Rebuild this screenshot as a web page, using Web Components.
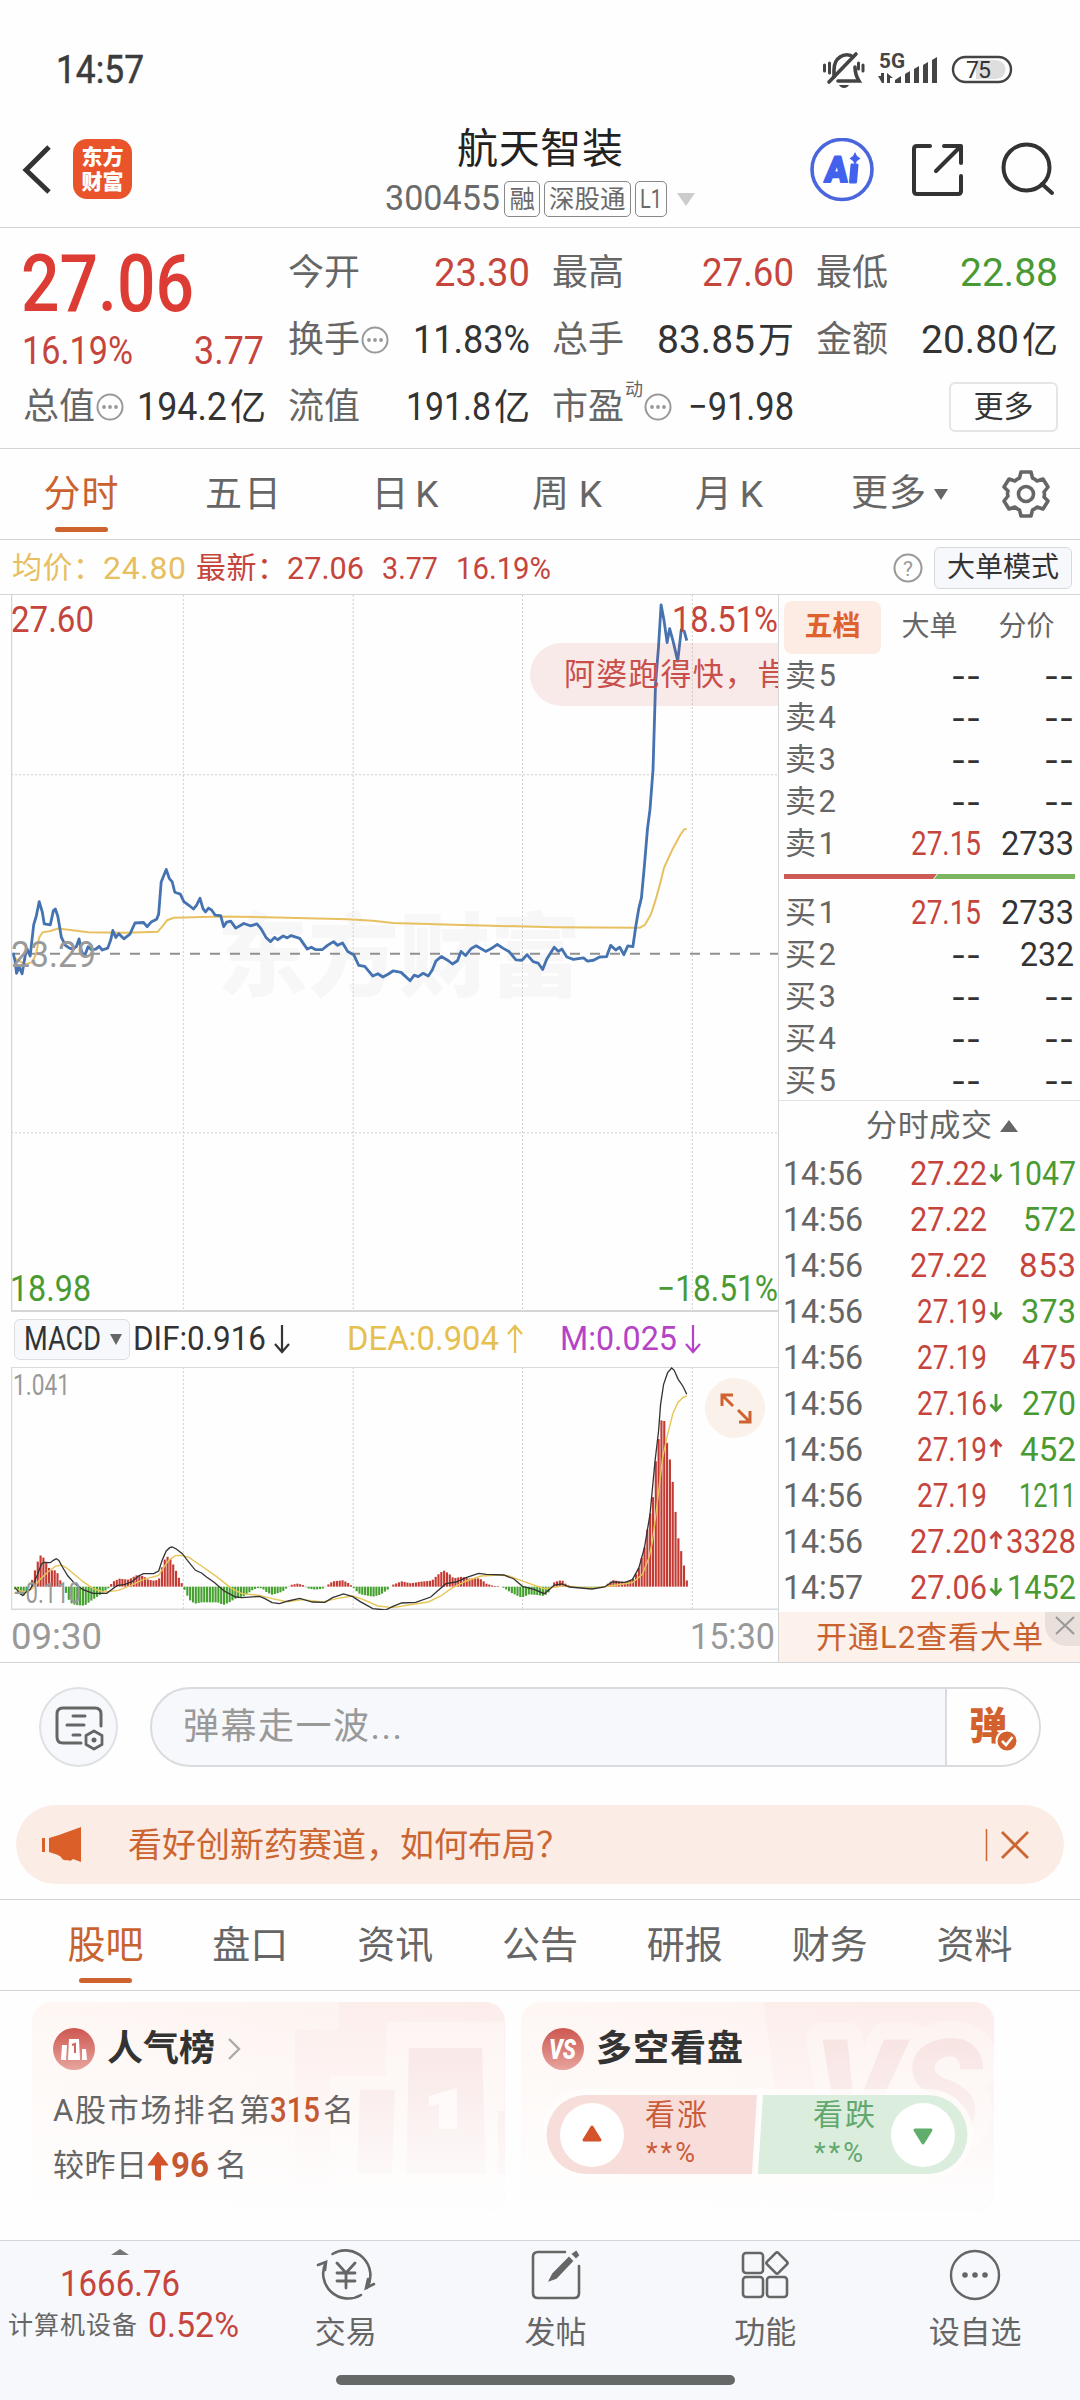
<!DOCTYPE html>
<html lang="zh-CN">
<head>
<meta charset="utf-8">
<title>航天智装 300455</title>
<style>
    body {
        margin: 0;
        width: 1080px;
        height: 2400px;
        overflow: hidden;
        background: #fefefe;
        font-family: Roboto, "Noto Sans CJK SC", sans-serif;
        color: #666;
        --red: #c5453d;
        --green: #4a9a33;
        --orange: #c9622f;
        --line: #d4d5d6;
        --soft: #f7f8fb;
    }
</style>
</head>
<body>
<status-bar></status-bar>
<app-header></app-header>
<quote-panel></quote-panel>
<period-tabs></period-tabs>
<chart-info></chart-info>
<chart-area></chart-area>
<danmu-bar></danmu-bar>
<promo-banner>看好创新药赛道，如何布局？</promo-banner>
<section-tabs></section-tabs>
<card-row></card-row>
<bottom-nav></bottom-nav>

<script>
class BaseElement extends HTMLElement {
    constructor() {
        super();
        this.myRoot = this.attachShadow({ mode: "open" });
        this.myRoot.innerHTML = this.Render();
    }
}

// single line of text fitted to a given width: narrowed if too long, spread if too short
class FitText extends HTMLElement {
    constructor() {
        super();
        this.myRoot = this.attachShadow({ mode: "open" });
        this.myRoot.innerHTML = `
            <style>
            :host { display: inline-block; white-space: nowrap; flex: none; text-align: left; }
            span { display: inline-block; transform-origin: 0 50%; }
            </style>
            <span><slot></slot></span>
        `
    }

    connectedCallback() {
        const span = this.myRoot.querySelector("span");
        const count = this.textContent.length;
        const width = Number(this.getAttribute("w"));
        const natural = span.getBoundingClientRect().width;
        if (!natural || !width || count < 2) return;
        if (natural > width) {
            this.style.width = width + "px";
            span.style.transform = `scaleX(${width / natural})`;
            return;
        }
        const space = (width - natural) / (count - 1);
        span.style.letterSpacing = space + "px";
        span.style.marginRight = -space + "px";
    }
}

class StatusBar extends BaseElement {
    Render() {
        return `
            <style>
            :host { display: flex; height: 112px; padding: 28px 54px 0 56px; box-sizing: border-box; align-items: flex-start; color: #3c3c3c; }
            .time { font-size: 38px; line-height: 85px; flex: 1; -webkit-text-stroke: .5px #3c3c3c; }
            svg { display: block; margin-top: 19px; }
            </style>
            <div class="time"><fit-text w="88">14:57</fit-text></div>
            <svg width="206" height="46" viewBox="820 48 206 46">
                <g fill="none" stroke="#444" stroke-width="3.6" stroke-linecap="round">
                    <path d="M834 78v-7c0-7 3-11 6-13 4-3 10-3 13 0M838 82h19M855 68c0 6 1 9 4 14h-5"/>
                    <path d="M829 83 856 55"/>
                    <path d="M824.500 66v6M829.500 64v10M863 66v6M858.500 64v6" stroke-width="3"/>
                </g>
                <path d="M839 86h10c-2 4-8 4-10 0z" fill="#444"/>
                <text x="879" y="68.500" font-size="20" font-weight="700" fill="#444" textLength="26" lengthAdjust="spacingAndGlyphs" font-family="Roboto">5G</text>
                <path d="M878 77h3v-3h3v10h-2zM887 74l6 5h-3v5h-3z" fill="#444"/>
                <g fill="#444">
                    <path d="M895 81l6-4v7h-6zM905 75l5-3v12h-5zM914 70l5-3v17h-5zM923 66l5-3v21h-5zM932 61l5-3v26h-5z"/>
                </g>
                <rect x="953" y="58" width="58" height="25" rx="12.500" fill="#fff" stroke="#444" stroke-width="2.400"/>
                <path d="M976 61h20a9.500 9.500 0 0 1 0 19h-20z" fill="#dedede"/>
                <text x="966" y="78.500" font-size="23" fill="#333" textLength="25" font-family="Roboto">75</text>
            </svg>
        `
    }
}

class AppHeader extends BaseElement {
    Render() {
        return `
            <style>
            :host { display: flex; height: 116px; box-sizing: border-box; border-bottom: 1px solid var(--line); position: relative; }
            .left { width: 132px; display: flex; padding: 27px 0 0 22px; align-items: flex-start; box-sizing: border-box; }
            .logo {
                width: 59px; height: 60px; border-radius: 14px; background: #e9542a; color: #fff; margin-left: 21px; box-sizing: border-box;
                font: 900 21px/25px "Noto Sans CJK SC", sans-serif; text-align: center; padding-top: 4px;
            }
            .mid { flex: 1; text-align: center; padding-left: 138px; }
            h1 { margin: 9px 0 0; font: 400 41px/56px Roboto, "Noto Sans CJK SC", sans-serif; color: #222; }
            .code { display: flex; justify-content: center; align-items: center; gap: 4px; font-size: 35px; line-height: 38px; color: #6a6a6a; margin-top: 3px; }
            .tag { border: 1px solid #888; border-radius: 5px; font-size: 25.500px; line-height: 34px; padding: 0 4px; height: 34px; }
            .down { border: 9px solid transparent; border-top: 13px solid #ccc; border-bottom: 0; margin-left: 6px; }
            </style>
            <div class="left">
                <svg width="30" height="60" viewBox="0 0 30 60"><path d="M27 8 4 31 27 53" fill="none" stroke="#333" stroke-width="5"/></svg>
                <div class="logo">东方<br>财富</div>
            </div>
            <div class="mid">
                <h1><fit-text w="166">航天智装</fit-text></h1>
                <div class="code"><fit-text w="115">300455</fit-text><span class="tag">融</span><span class="tag">深股通</span><span class="tag"><fit-text w="22">L1</fit-text></span><span class="down"></span></div>
            </div>
            <svg width="270" height="66" viewBox="810 138 270 66" style="margin-top:26px">
                <circle cx="842" cy="169.500" r="30" fill="#fff" stroke="#4a66dd" stroke-width="3.600"/>
                <g fill="#4262ee" stroke="#4262ee" stroke-linejoin="round" font-family="Roboto">
                    <text transform="translate(824 182) skewX(-5)" font-size="36" font-weight="900" textLength="23" lengthAdjust="spacingAndGlyphs" stroke-width="2">A</text>
                    <path d="M852 165h5l-1.500 17h-5z" stroke-width="3"/>
                </g>
                <path d="M855 152l2 4 3.500 2.500-3.500 2.500-2 4-2-4-3.500-2.500 3.500-2.500z" fill="#4262ee"/>
                <g fill="none" stroke="#333" stroke-width="4" stroke-linecap="round" stroke-linejoin="round">
                    <path d="M930 146h-13q-3 0-3 3v42q0 3 3 3h41q3 0 3-3v-15M944 146h17v17M960 147l-24 24"/>
                    <circle cx="1026.500" cy="167.500" r="23"/>
                    <path d="M1042 184l10 9"/>
                </g>
            </svg>
        `
    }
}

class QuoteCell extends HTMLElement {
    constructor() {
        super();
        this.myRoot = this.attachShadow({ mode: "open" });
        const dots = this.hasAttribute("dots") ? `<svg width="28" height="28" viewBox="0 0 28 28"><circle cx="14" cy="14" r="12.500" fill="none" stroke="#999" stroke-width="2"/><g fill="#999"><circle cx="8" cy="14" r="1.900"/><circle cx="14" cy="14" r="1.900"/><circle cx="20" cy="14" r="1.900"/></g></svg>` : "";
        const sup = this.getAttribute("sup");
        this.myRoot.innerHTML = `
            <style>
            :host { display: flex; height: 66px; align-items: center; justify-content: space-between; color: #333; font-size: 39px; line-height: 66px; margin-right: -2px; }
            .label { display: flex; align-items: center; color: #666; font-size: 36px; }
            sup { font-size: 18px; line-height: 20px; align-self: flex-start; margin: 6px 0 0 1px; }
            svg { display: block; margin-left: 1px; }
            </style>
            <span class="label"><fit-text w="72">${this.getAttribute("label")}</fit-text>${sup ? `<sup>${sup}</sup>` : ""}${dots}</span>
            <span class="value"><slot></slot></span>
        `
    }
}

class QuotePanel extends BaseElement {
    Render() {
        return `
            <style>
            :host { display: grid; grid-template-columns: 241px repeat(3, 240px); gap: 0 24px; height: 221px; box-sizing: border-box; padding: 12px 24px 0 23px; border-bottom: 1px solid var(--line); align-content: start; }
            .last { grid-row: span 2; color: var(--red); }
            .price { font-size: 79px; line-height: 88px; color: #dc3c33; font-weight: 500; margin-left: -2px; }
            .change { display: flex; justify-content: space-between; font-size: 38px; line-height: 46px; margin-left: -1px; }
            .red { color: var(--red); }
            .green { color: var(--green); }
            .cn { font-size: 36px; margin-left: 3px; }
            .more { align-self: center; justify-self: end; width: 109px; height: 50px; box-sizing: border-box; border: 2px solid #e4e5e6; border-radius: 6px; font-size: 30px; line-height: 45px; color: #333; text-align: center; margin-right: -2px; }
            </style>
            <div class="last">
                <div class="price"><fit-text w="173">27.06</fit-text></div>
                <div class="change"><fit-text w="111">16.19%</fit-text><fit-text w="70">3.77</fit-text></div>
            </div>
            <quote-cell label="今开"><fit-text w="96" class="red">23.30</fit-text></quote-cell>
            <quote-cell label="最高"><fit-text w="92" class="red">27.60</fit-text></quote-cell>
            <quote-cell label="最低"><fit-text w="98" class="green">22.88</fit-text></quote-cell>
            <quote-cell label="换手" dots><fit-text w="117">11.83%</fit-text></quote-cell>
            <quote-cell label="总手"><fit-text w="98">83.85</fit-text><span class="cn">万</span></quote-cell>
            <quote-cell label="金额"><fit-text w="98">20.80</fit-text><span class="cn">亿</span></quote-cell>
            <quote-cell label="总值" dots><fit-text w="90">194.2</fit-text><span class="cn">亿</span></quote-cell>
            <quote-cell label="流值"><fit-text w="85">191.8</fit-text><span class="cn">亿</span></quote-cell>
            <quote-cell label="市盈" sup="动" dots><fit-text w="106">−91.98</fit-text></quote-cell>
            <div class="more">更多</div>
        `
    }
}

class PeriodTabs extends BaseElement {
    Render() {
        return `
            <style>
            :host { display: flex; height: 91px; box-sizing: border-box; border-bottom: 1px solid var(--line); font-size: 37px; line-height: 92px; }
            div { width: 162px; text-align: center; }
            .on { color: var(--orange); display: flex; flex-direction: column; align-items: center; }
            .on fit-text { height: 78px; }
            .on::after { content: ""; width: 53px; height: 5px; border-radius: 3px; background: #cf632f; }
            .more { display: flex; align-items: center; justify-content: center; gap: 8px; padding-left: 17px; width: 145px; }
            .more i { border: 7px solid transparent; border-top: 11px solid #666; border-bottom: 0; }
            .gear { width: 108px; display: flex; align-items: center; justify-content: center; }
            </style>
            <div class="on"><fit-text w="75">分时</fit-text></div>
            <div><fit-text w="76">五日</fit-text></div>
            <div><fit-text w="67">日K</fit-text></div>
            <div><fit-text w="70">周K</fit-text></div>
            <div><fit-text w="68">月K</fit-text></div>
            <div class="more"><fit-text w="75">更多</fit-text><i></i></div>
            <div class="gear">
                <svg width="48" height="50" viewBox="-24 -25 48 50" fill="none" stroke="#666" stroke-width="3.600" stroke-linejoin="round">
                    <path d="M-5-22H5L6.500-16Q9-15 11-13L17-15 22-7 18-2Q19 0 18 3L22 7 17 15 11 13Q9 15 6.500 16L5 22H-5L-6.500 16Q-9 15-11 13L-17 15-22 7-18 2Q-19 0-18-3L-22-7-17-15-11-13Q-9-15-6.500-16Z"/>
                    <circle r="7.500"/>
                </svg>
            </div>
        `
    }
}

class ChartInfo extends BaseElement {
    Render() {
        return `
            <style>
            :host { display: flex; height: 55px; box-sizing: border-box; border-bottom: 1px solid var(--line); padding: 2px 8px 0 12px; align-items: center; font-size: 32px; line-height: 50px; color: var(--red); }
            .cn { font-size: 30px; }
            .avg { color: #e7bf60; display: flex; width: 184px; }
            .new { display: flex; flex: 1; }
            .btn { box-sizing: border-box; width: 138px; height: 42px; border: 1px solid #d6d8dc; border-radius: 6px; background: var(--soft); color: #333; font-size: 28px; line-height: 39px; text-align: center; margin-left: 11px; }
            </style>
            <div class="avg"><fit-text class="cn" w="91">均价：</fit-text><fit-text w="83">24.80</fit-text></div>
            <div class="new"><fit-text class="cn" w="91">最新：</fit-text><fit-text w="77">27.06</fit-text><fit-text w="56" style="margin-left:18px">3.77</fit-text><fit-text w="95" style="margin-left:18px">16.19%</fit-text></div>
            <svg width="30" height="30" viewBox="0 0 30 30"><circle cx="15" cy="15" r="13.500" fill="none" stroke="#999" stroke-width="2"/><text x="15" y="22.500" text-anchor="middle" font-size="21" fill="#999" font-family="Roboto">?</text></svg>
            <div class="btn">大单模式</div>
        `
    }
}

class PriceChart extends BaseElement {
    Render() {
        const price = "26,778 30,795 33,822 38,808 44,823 50,785 54,770 60,785 67,718 72,700 78,668 84,690 88,716 100,718 106,688 110,684 115,700 122,745 130,762 138,768 145,770 152,764 157,748 162,775 168,785 175,765 182,772 190,770 197,764 203,772 214,768 220,750 224,730 230,745 236,737 246,748 258,738 268,714 285,713 292,722 300,712 311,706 315,695 320,626 330,599 336,618 342,626 347,648 358,652 365,668 375,676 384,684 390,676 397,661 403,683 408,690 414,682 420,686 427,697 438,698 444,722 450,712 458,710 468,725 484,715 497,720 510,716 518,726 528,745 537,754 545,745 551,750 562,742 570,746 578,741 595,747 610,770 618,766 626,771 640,771 650,762 662,754 670,762 680,757 690,775 702,782 712,805 724,807 740,828 750,823 760,830 770,824 780,817 796,820 803,827 814,838 822,826 830,829 840,822 850,828 858,815 865,796 876,786 890,795 898,802 908,795 915,775 924,784 935,769 945,763 964,775 975,769 987,760 998,768 1010,775 1024,793 1036,794 1046,782 1058,797 1068,800 1077,814 1085,792 1093,778 1100,766 1108,775 1115,770 1125,787 1138,792 1158,789 1166,796 1178,794 1190,787 1204,786 1212,762 1222,772 1230,766 1238,782 1246,763 1256,765 1262,720 1268,682 1273,660 1279,590 1285,512 1290,470 1296,385 1301,200 1307,120 1312,31 1318,66 1324,112 1329,82 1336,110 1345,152 1352,85 1358,88 1363,108";
        const average = "30,790 50,803 64,798 72,780 78,745 85,734 100,731 115,726 140,729 175,734 250,735 313,733 322,722 332,708 345,703 440,700 550,702 690,706 740,709 780,714 900,718 1100,723 1270,724 1280,718 1292,695 1301,665 1310,630 1318,595 1335,555 1350,525 1358,513 1363,512";
        return `
            <style>
            :host { display: block; position: relative; width: 767px; height: 717px; margin-left: 11px; box-sizing: border-box; overflow: hidden; font-size: 36px; line-height: 40px; }
            svg { position: absolute; left: 0; top: 0; }
            polyline, line { vector-effect: non-scaling-stroke; fill: none; }
            .grid line { stroke: #cfcfcf; stroke-width: 1px; stroke-dasharray: 2 2; }
            fit-text { position: absolute; }
            .tl { left: 0; top: 5px; color: var(--red); }
            .tr { right: 0; top: 5px; color: var(--red); }
            .bl { left: -1px; bottom: 3px; color: var(--green); }
            .br { right: 0; bottom: 3px; color: var(--green); }
            .ml { left: 0; top: 340px; color: #999; }
            .mark { left: 206px; top: 308px; font-size: 91px; line-height: 110px; font-weight: 900; color: #f7f7f7; }
            .bubble { position: absolute; left: 519px; top: 48px; width: 280px; height: 63px; border-radius: 32px; background: rgba(206, 60, 60, .1); box-sizing: border-box; padding-left: 34px; font-size: 31px; line-height: 63px; color: #c9504a; white-space: nowrap; }
            .bubble fit-text { position: static; }
            </style>
            <fit-text class="mark" w="364">东方财富</fit-text>
            <svg width="767" height="717" viewBox="22 10 1522 1539" preserveAspectRatio="none">
                <g class="grid">
                    <line x1="364" y1="10" x2="364" y2="1549"/><line x1="701" y1="10" x2="701" y2="1549"/>
                    <line x1="1037" y1="10" x2="1037" y2="1549"/><line x1="1374" y1="10" x2="1374" y2="1549"/>
                    <line x1="22" y1="396" x2="1544" y2="396"/><line x1="22" y1="1164" x2="1544" y2="1164"/>
                </g>
                <line x1="22" y1="780" x2="1544" y2="780" stroke="#909090" stroke-width="2" stroke-dasharray="10 10" stroke-dashoffset="1"/>
                <polyline points="${average}" stroke="#e8c05f" stroke-width="2"/>
                <polyline points="${price}" stroke="#4572b0" stroke-width="2.800" stroke-linejoin="round"/>
                <line x1="23" y1="10" x2="23" y2="1549" stroke="#d4d5d6" stroke-width="1.500"/>
                <line x1="22" y1="1547" x2="1544" y2="1547" stroke="#d4d5d6" stroke-width="2"/>
            </svg>
            <fit-text class="tl" w="83">27.60</fit-text>
            <fit-text class="tr" w="106">18.51%</fit-text>
            <fit-text class="ml" w="85">23.29</fit-text>
            <fit-text class="bl" w="81">18.98</fit-text>
            <fit-text class="br" w="121">−18.51%</fit-text>
            <div class="bubble"><fit-text w="224">阿婆跑得快，肯</fit-text></div>
        `
    }
}

class MacdChart extends BaseElement {
    Bars() {
        // x, tip of the bar; 887 is the zero line
        const keys = [[30,895],[45,918],[57,890],[60,887],[66,853],[72,825],[78,797],[83,790],[89,810],[95,825],[100,838],[111,838],[117,855],[122,880],[127,890],[133,915],[139,935],[150,942],[168,944],[180,930],[195,915],[215,892],[220,880],[224,872],[237,863],[255,866],[270,853],[285,855],[292,865],[305,869],[315,866],[320,835],[325,810],[331,796],[337,802],[342,815],[348,835],[354,858],[360,875],[365,893],[370,910],[378,930],[387,938],[400,934],[432,934],[443,942],[455,934],[470,920],[485,915],[500,898],[510,891],[520,892],[530,905],[540,911],[550,907],[560,902],[570,890],[577,882],[590,878],[600,881],[610,892],[625,896],[640,893],[650,882],[660,871],[680,868],[690,875],[700,887],[707,900],[715,910],[740,917],[755,911],[770,895],[778,882],[797,871],[815,877],[835,872],[857,869],[868,852],[880,838],[891,848],[900,862],[917,857],[930,863],[945,861],[955,865],[965,878],[980,885],[990,885],[1000,891],[1015,906],[1035,920],[1050,910],[1065,912],[1080,915],[1090,902],[1095,887],[1100,873],[1115,867],[1122,878],[1135,887],[1160,890],[1180,893],[1200,886],[1210,873],[1218,867],[1230,872],[1245,873],[1258,862],[1268,830],[1279,768],[1285,710],[1290,668],[1296,615],[1301,513],[1306,453],[1312,388],[1318,390],[1323,450],[1329,503],[1335,575],[1340,657],[1346,742],[1352,783],[1357,822],[1363,870]];
        let out = "";
        for (let i = 0, k = 0; i < 239; i++) {
            const x = 30 + i * 5.6;
            while (k < keys.length - 2 && keys[k + 1][0] < x) k++;
            const [x1, y1] = keys[k], [x2, y2] = keys[k + 1];
            const y = y1 + (y2 - y1) * (x - x1) / (x2 - x1);
            const up = y < 887;
            out += `<rect x="${(x - 1.8).toFixed(1)}" y="${(up ? y : 887).toFixed(1)}" width="4.200" height="${Math.abs(887 - y).toFixed(1)}" fill="${up ? "#c43a32" : "#45a02f"}"/>`;
        }
        return out;
    }

    Render() {
        const dif = "30,890 37,902 45,914 52,903 60,895 66,880 75,850 82,820 87,814 100,815 106,808 112,803 117,808 124,828 135,855 150,880 165,896 185,907 212,907 220,898 232,884 248,880 262,872 275,855 285,848 305,848 315,840 322,808 330,780 337,770 342,768 350,774 362,788 372,808 388,838 400,846 410,858 425,874 445,900 468,918 480,920 515,916 525,922 540,935 555,938 572,930 595,922 620,933 645,934 660,920 682,909 700,917 715,932 740,953 765,957 780,946 797,936 825,934 855,918 870,898 885,878 905,873 925,860 950,847 965,850 1000,852 1020,864 1037,886 1060,895 1080,908 1092,893 1100,882 1115,879 1130,888 1175,894 1200,888 1215,873 1240,874 1255,866 1268,830 1279,770 1290,670 1300,510 1307,420 1311,340 1317,280 1325,245 1333,231 1338,238 1346,265 1355,285 1363,310";
        const dea = "30,890 40,900 55,903 65,892 80,865 95,843 110,826 120,822 130,828 145,847 165,872 185,893 205,903 235,898 260,883 285,865 315,853 325,830 335,808 348,794 360,793 375,799 400,825 430,857 460,893 480,908 515,913 540,923 570,932 600,926 640,933 670,922 700,915 720,925 750,945 780,950 810,942 850,933 875,915 895,893 925,870 955,855 990,852 1010,855 1040,872 1080,893 1100,889 1120,884 1150,889 1180,891 1210,885 1255,875 1275,850 1288,800 1295,750 1305,630 1315,500 1325,430 1335,370 1345,335 1355,320 1363,315";
        const arrow = up => `<svg width="18" height="30" viewBox="0 0 18 30" fill="none" stroke="currentColor" stroke-width="2.200"><path d="${up ? "M9 29V3M2 10 9 2 16 10" : "M9 1V27M2 20 9 28 16 20"}"/></svg>`;
        return `
            <style>
            :host { display: block; margin-left: 11px; width: 767px; }
            .legend { display: flex; align-items: center; height: 55px; font-size: 33px; line-height: 50px; color: #333; padding-left: 3px; box-sizing: border-box; padding-bottom: 1px; }
            .btn { display: flex; align-items: center; gap: 9px; box-sizing: border-box; width: 116px; height: 41px; padding-left: 9px; border: 1px solid #dcdee3; border-radius: 6px; background: var(--soft); margin-right: 3px; }
            .btn i { border: 6.500px solid transparent; border-top: 11px solid #666; border-bottom: 0; }
            .legend span { display: flex; align-items: center; gap: 7px; }
            .dif { width: 214px; }
            .dea { width: 213px; color: #e6c04f; }
            .m { color: #b543c6; }
            .plot { position: relative; height: 243px; }
            .plot > svg { display: block; }
            polyline, line { vector-effect: non-scaling-stroke; fill: none; }
            .grid line { stroke: #cfcfcf; stroke-width: 1px; stroke-dasharray: 2 2; }
            .top { position: absolute; left: 2px; top: 0; font-size: 29px; line-height: 36px; color: #999; }
            .low { position: absolute; left: 2px; bottom: -1px; font-size: 29px; line-height: 36px; color: #999; }
            .zoom { position: absolute; left: 694px; top: 11px; width: 60px; height: 60px; border-radius: 50%; background: #fbf1eb; }
            .time { display: flex; justify-content: space-between; height: 52px; font-size: 37px; line-height: 54px; color: #999; padding-right: 3px; }
            </style>
            <div class="legend">
                <div class="btn"><fit-text w="77">MACD</fit-text><i></i></div>
                <span class="dif"><fit-text w="133">DIF:0.916</fit-text>${arrow(false)}</span>
                <span class="dea"><fit-text w="152">DEA:0.904</fit-text>${arrow(true)}</span>
                <span class="m"><fit-text w="117">M:0.025</fit-text>${arrow(false)}</span>
            </div>
            <div class="plot">
                <svg width="767" height="243" viewBox="22 228 1522 729" preserveAspectRatio="none">
                    <g class="grid">
                        <line x1="364" y1="228" x2="364" y2="957"/><line x1="701" y1="228" x2="701" y2="957"/>
                        <line x1="1037" y1="228" x2="1037" y2="957"/><line x1="1374" y1="228" x2="1374" y2="957"/>
                    </g>
                    <g stroke="#d9dadb" stroke-width="1.500">
                        <line x1="22" y1="229" x2="1544" y2="229"/><line x1="23" y1="228" x2="23" y2="957"/><line x1="22" y1="955" x2="1544" y2="955"/>
                    </g>
                    ${this.Bars()}
                    <polyline points="${dea}" stroke="#e6c655" stroke-width="1.400"/>
                    <polyline points="${dif}" stroke="#333" stroke-width="1.300"/>
                </svg>
                <fit-text class="top" w="57">1.041</fit-text>
                <fit-text class="low" w="68">−0.110</fit-text>
                <div class="zoom">
                    <svg width="60" height="60" viewBox="0 0 60 60" fill="none" stroke="#cf6230" stroke-width="3"><path d="M17 28V17H28M17.500 17.500 28 28M45 33V44H34M44.500 43.500 33 32"/></svg>
                </div>
            </div>
            <div class="time"><fit-text w="91">09:30</fit-text><fit-text w="85">15:30</fit-text></div>
        `
    }
}

class OrderBook extends BaseElement {
    Row(label, price, w, amount, aw) {
        const cell = (v, width) => v === "--" ? `<fit-text class="none" w="30">--</fit-text>` : `<fit-text w="${width}">${v}</fit-text>`;
        return `<div class="row"><span class="label"><fit-text w="51">${label}</fit-text></span><span class="price ${price === "--" ? "" : "red"}">${cell(price, w)}</span><span class="amount">${cell(amount, aw)}</span></div>`;
    }

    Render() {
        return `
            <style>
            :host { display: block; height: 506px; box-sizing: border-box; border-bottom: 1px solid #e2e3e4; padding: 6px 5px 0; }
            .tabs { display: flex; height: 53px; font-size: 28px; line-height: 52px; text-align: center; margin-bottom: 1px; }
            .tabs div { width: 97px; }
            .tabs .on { background: #fcece4; color: #df622d; border-radius: 8px; font-weight: 700; }
            .row { display: flex; height: 42px; line-height: 42px; font-size: 33px; color: #333; padding: 0 1px; }
            .label { width: 92px; font-size: 31px; color: #666; }
            .price { width: 104px; text-align: right; }
            .amount { flex: 1; text-align: right; }
            .none { font-family: Inter, Roboto, sans-serif; }
            .red { color: var(--red); }
            svg { display: block; margin: 9px 0 13px; }
            </style>
            <div class="tabs"><div class="on">五档</div><div>大单</div><div>分价</div></div>
            ${["卖5", "卖4", "卖3", "卖2"].map(l => this.Row(l, "--", 0, "--", 0)).join("")}
            ${this.Row("卖1", "27.15", 70, "2733", 73)}
            <svg width="291" height="5" viewBox="0 0 291 5"><path d="M0 0H153L149 5H0z" fill="#cd5a55"/><path d="M154 0H291V5H150z" fill="#7bb55f"/></svg>
            ${this.Row("买1", "27.15", 70, "2733", 73)}
            ${this.Row("买2", "--", 0, "232", 54)}
            ${["买3", "买4", "买5"].map(l => this.Row(l, "--", 0, "--", 0)).join("")}
        `
    }
}

class TradeList extends BaseElement {
    Render() {
        const trades = [
            ["14:56", "27.22", "down", "1047", "g", 77, 68],
            ["14:56", "27.22", "", "572", "g", 77, 53],
            ["14:56", "27.22", "", "853", "r", 77, 57],
            ["14:56", "27.19", "down", "373", "g", 70, 55],
            ["14:56", "27.19", "", "475", "r", 70, 54],
            ["14:56", "27.16", "down", "270", "g", 70, 54],
            ["14:56", "27.19", "up", "452", "g", 70, 56],
            ["14:56", "27.19", "", "1211", "g", 70, 57],
            ["14:56", "27.20", "up", "3328", "r", 77, 70],
            ["14:57", "27.06", "down", "1452", "g", 77, 69]
        ];
        const arrows = { down: "M8 2V18M2.500 12.500 8 18.500 13.500 12.500", up: "M8 19V3M2.500 8.500 8 2.500 13.500 8.500" };
        return `
            <style>
            :host { display: block; height: 511px; padding: 0 4px 0 4px; box-sizing: border-box; }
            .head { height: 49px; display: flex; justify-content: center; align-items: center; gap: 8px; font-size: 31px; line-height: 50px; padding-left: 25px; }
            .head i { border: 9px solid transparent; border-bottom: 12px solid #666; border-top: 0; }
            .row { display: flex; height: 46px; line-height: 47px; font-size: 33px; align-items: center; }
            .time { width: 100px; }
            .price { width: 104px; text-align: right; color: var(--red); }
            svg { width: 16px; flex: none; margin-left: 1px; }
            .amount { flex: 1; display: flex; justify-content: flex-end; }
            .g, .down { color: var(--green); }
            .r, .up { color: var(--red); }
            </style>
            <div class="head"><fit-text w="126">分时成交</fit-text><i></i></div>
            ${trades.map(t => `<div class="row"><span class="time"><fit-text w="80">${t[0]}</fit-text></span><span class="price"><fit-text w="${t[5]}">${t[1]}</fit-text></span><svg class="${t[2]}" width="16" height="22" viewBox="0 0 16 22" fill="none" stroke="currentColor" stroke-width="2.800"><path d="${arrows[t[2]] || ""}"/></svg><span class="amount ${t[4]}"><fit-text w="${t[6]}">${t[3]}</fit-text></span></div>`).join("")}
        `
    }
}

class ChartArea extends BaseElement {
    Render() {
        return `
            <style>
            :host { display: flex; height: 1068px; box-sizing: border-box; border-bottom: 1px solid var(--line); }
            .left { width: 778px; }
            .right { width: 301px; border-left: 1px solid var(--line); }
            .level2 { display: flex; height: 50px; background: #fcf1eb; color: var(--orange); font-size: 31px; line-height: 51px; padding-left: 37px; }
            .close { width: 35px; height: 34px; background: #e9dfdb; border-radius: 0 0 0 22px; margin-left: auto; }
            .close svg { display: block; }
            </style>
            <div class="left"><price-chart></price-chart><macd-chart></macd-chart></div>
            <div class="right">
                <order-book></order-book>
                <trade-list></trade-list>
                <div class="level2"><fit-text w="227">开通L2查看大单</fit-text><div class="close"><svg width="35" height="34" viewBox="0 0 35 34"><path d="M11 5 29 22M29 5 11 22" stroke="#999" stroke-width="2" fill="none"/></svg></div></div>
            </div>
        `
    }
}

class DanmuBar extends BaseElement {
    Render() {
        return `
            <style>
            :host { display: flex; height: 142px; box-sizing: border-box; padding: 24px 39px 0 39px; }
            .set { width: 79px; height: 80px; box-sizing: border-box; border: 2px solid #dfe1e4; border-radius: 50%; background: var(--soft); }
            .field { margin-left: 32px; flex: 1; display: flex; height: 80px; box-sizing: border-box; border: 2px solid #d9dbde; border-radius: 40px; overflow: hidden; background: var(--soft); }
            .hint { flex: 1; padding-left: 31px; font-size: 36px; line-height: 76px; color: #999; }
            .send { width: 92px; border-left: 2px solid #d9dbde; background: #fefefe; }
            svg { display: block; }
            </style>
            <div class="set">
                <svg width="75" height="76" viewBox="41 1689 75 76" fill="none" stroke="#666" stroke-width="3">
                    <path d="M81 1743H63q-6 0-6-6V1714q0-6 6-6H95q6 0 6 6V1726M73 1716H85M67 1725H84M73 1735H80" stroke-linecap="round"/>
                    <path d="M94 1731l8 4.500v9l-8 4.500-8-4.500v-9z" stroke-width="2.800" stroke-linejoin="round"/>
                    <circle cx="94" cy="1740" r="2.500" fill="#666" stroke="none"/>
                </svg>
            </div>
            <div class="field">
                <div class="hint"><fit-text w="219">弹幕走一波...</fit-text></div>
                <div class="send">
                    <svg width="92" height="76" viewBox="948 1689 92 76">
                        <text x="970" y="1739" font-size="38" font-weight="900" fill="#d2612d" font-family="Noto Sans CJK SC">弹</text>
                        <circle cx="1008" cy="1741" r="10.500" fill="#d2612d" stroke="#fff" stroke-width="2"/>
                        <path d="M1003 1741l4 4 6.500-8" fill="none" stroke="#fff" stroke-width="2.600"/>
                    </svg>
                </div>
            </div>
        `
    }
}

class PromoBanner extends BaseElement {
    Render() {
        return `
            <style>
            :host { display: flex; align-items: center; height: 79px; margin: 0 16px 15px; border-radius: 40px; background: #fbede5; color: #cb6531; box-sizing: border-box; padding-left: 24px; }
            .text { flex: 1; font-size: 34px; line-height: 78px; padding-left: 46px; }
            </style>
            <svg width="42" height="38" viewBox="40 1826 42 38" fill="#da5f29"><path d="M42 1838h3v14h-3zM49 1838l10-3 22-8v35l-8-3q-2 3-6 1-4 1-6-3l-3-2-9-3z"/></svg>
            <div class="text"><slot></slot></div>
            <svg width="84" height="40" viewBox="0 0 84 40" fill="none" stroke="#cb6531"><path d="M6.500 4V36" stroke-width="1.500"/><path d="M22 7 48 33M48 7 22 33" stroke-width="2.800"/></svg>
        `
    }
}

class SectionTabs extends BaseElement {
    Render() {
        return `
            <style>
            :host { display: flex; height: 92px; box-sizing: border-box; border-top: 1px solid var(--line); border-bottom: 1px solid var(--line); padding: 0 33px; font-size: 38px; line-height: 91px; }
            div { flex: 1; text-align: center; }
            .on { color: var(--orange); display: flex; flex-direction: column; align-items: center; }
            .on span { height: 78px; }
            .on::after { content: ""; width: 53px; height: 5px; border-radius: 3px; background: #cf632f; }
            </style>
            <div class="on"><span>股吧</span></div>
            ${["盘口", "资讯", "公告", "研报", "财务", "资料"].map(t => `<div>${t}</div>`).join("")}
        `
    }
}

class InfoCard extends BaseElement {
    Render() {
        return `
            <style>
            :host { display: block; position: relative; width: 473px; height: 210px; border-radius: 20px; overflow: hidden; background: linear-gradient(100deg, #fef7f4, #fdf2ef 90%); box-sizing: border-box; }
            .fade { position: absolute; inset: 0; background: linear-gradient(rgba(254,254,254,0), rgba(254,254,254,.95) 95%); }
            .body { position: relative; padding: 23px 22px 0 21px; }
            .title { display: flex; align-items: center; height: 48px; gap: 12px; font-size: 36px; line-height: 50px; font-weight: 700; color: #333; }
            </style>
            <slot name="art"></slot>
            <div class="fade"></div>
            <div class="body">
                <div class="title"><slot name="icon"></slot><slot name="title"></slot></div>
                <slot></slot>
            </div>
        `
    }
}

class CardRow extends BaseElement {
    Render() {
        return `
            <style>
            :host { display: flex; gap: 16px; height: 249px; padding: 11px 0 0 32px; box-sizing: border-box; }
            .art { position: absolute; left: 0; top: 0; }
            .line { display: flex; align-items: center; font-size: 31px; line-height: 40px; }
            b { font-weight: 500; color: #c55931; font-size: 35px; }
            svg { display: block; flex: none; }
            .pill { margin: 16px 0 0 0; }
            </style>
            <info-card>
                <svg slot="art" class="art" width="473" height="210" viewBox="32 2002 473 210">
                    <path d="M339 2002H505V2212H295V2030H339z" fill="#fbe9e7" opacity=".55"/>
                    <path d="M386 2022H504V2212H330V2076H386z" fill="#fef6f4" opacity=".7"/>
                    <path d="M409 2048H482L486 2174H406zM360 2090H395L392 2174H357zM498 2111H527L533 2174H498z" fill="#f5dddc" opacity=".8"/>
                    <path d="M429 2096l28-8v41h-18v-25l-10 2z" fill="#fef6f4"/>
                </svg>
                <svg slot="icon" width="42" height="42" viewBox="0 0 42 42">
                    <defs><linearGradient id="g1" x2="0" y2="1"><stop stop-color="#cd5750"/><stop offset="1" stop-color="#e7a49e"/></linearGradient></defs>
                    <circle cx="21" cy="21" r="21" fill="url(#g1)"/>
                    <path d="M9 17H14L13 32H8zM16 11H26L27 32H15zM29 21H33L34 32H29z" fill="#fff"/>
                    <path d="M19 17l3-1v9" fill="none" stroke="#cf6660" stroke-width="2"/>
                </svg>
                <fit-text slot="title" w="108">人气榜</fit-text>
                <svg slot="title" width="14" height="24" viewBox="0 0 14 24"><path d="M2 2 12 12 2 22" fill="none" stroke="#aaa" stroke-width="2.400"/></svg>
                <div class="line" style="margin-top:18px"><fit-text w="217">A股市场排名第</fit-text><b><fit-text w="50">315</fit-text></b><span style="margin-left:3px">名</span></div>
                <div class="line" style="margin-top:15px"><fit-text w="94">较昨日</fit-text><svg width="22" height="30" viewBox="0 0 22 30"><path d="M11 1 21 14H13.500V29H8.500V14H1z" fill="#d4532b" stroke="#d4532b" stroke-linejoin="round"/></svg><b style="margin-left:2px;font-weight:700"><fit-text w="38">96</fit-text></b><span style="margin-left:7px">名</span></div>
            </info-card>
            <info-card>
                <svg slot="art" class="art" width="473" height="210" viewBox="521 2002 473 210">
                    <path d="M764 2002H994V2212H790z" fill="#fbe9e7" opacity=".6"/>
                    <text x="814" y="2140" font-family="Roboto" font-size="140" font-weight="900" font-style="italic" textLength="168" lengthAdjust="spacingAndGlyphs" fill="#f5dddc" stroke="#fdf3f1" stroke-width="34" stroke-linejoin="round" paint-order="stroke" opacity=".9">VS</text>
                </svg>
                <svg slot="icon" width="42" height="42" viewBox="0 0 42 42">
                    <defs><linearGradient id="g2" x2="0" y2="1"><stop stop-color="#cd5750"/><stop offset="1" stop-color="#e7a49e"/></linearGradient></defs>
                    <circle cx="21" cy="21" r="21" fill="url(#g2)"/>
                    <text x="7" y="31" font-family="Roboto" font-size="28" font-weight="900" font-style="italic" textLength="27" lengthAdjust="spacingAndGlyphs" fill="#fff">VS</text>
                </svg>
                <fit-text slot="title" w="147">多空看盘</fit-text>
                <svg class="pill" width="431" height="90" viewBox="542 2090 431 90" font-family="Roboto, 'Noto Sans CJK SC'">
                    <rect x="542" y="2090" width="431" height="90" rx="45" fill="#fffdfc" opacity=".75"/>
                    <path d="M586 2096H757L752 2175H586a39.500 39.500 0 0 1 0-79z" fill="#f8dedb"/>
                    <path d="M763 2096H928a39.500 39.500 0 0 1 0 79H758z" fill="#dbeddd"/>
                    <circle cx="592" cy="2136" r="32" fill="#fff"/><circle cx="923" cy="2136" r="32" fill="#fff"/>
                    <path d="M592 2128l8 13h-16z" fill="#d4532b" stroke="#d4532b" stroke-width="3" stroke-linejoin="round"/>
                    <path d="M923 2144l8-13h-16z" fill="#5fae6b" stroke="#5fae6b" stroke-width="3" stroke-linejoin="round"/>
                    <g fill="#cb5c39"><text x="645" y="2126" font-size="30" textLength="62">看涨</text><text x="646" y="2163" font-size="27" textLength="49">**%</text></g>
                    <g fill="#62a86f"><text x="813" y="2126" font-size="30" textLength="62">看跌</text><text x="814" y="2163" font-size="27" textLength="49">**%</text></g>
                </svg>
            </info-card>
        `
    }
}

class NavItem extends BaseElement {
    Render() {
        return `
            <style>
            :host { display: flex; flex-direction: column; align-items: center; width: 210px; padding-top: 7px; font-size: 31px; line-height: 40px; }
            .label { margin-top: 11px; }
            </style>
            <slot name="icon"></slot>
            <div class="label"><slot></slot></div>
        `
    }
}

class BottomNav extends BaseElement {
    Render() {
        return `
            <style>
            :host { display: block; height: 161px; box-sizing: border-box; border-top: 1px solid var(--line); background: var(--soft); }
            .items { display: flex; height: 134px; }
            .index { width: 241px; display: flex; flex-direction: column; align-items: center; color: var(--red); }
            .index i { border: 9px solid transparent; border-bottom: 6px solid #777; border-top: 0; margin-top: 8px; }
            .num { font-size: 37px; line-height: 40px; margin-top: 9px; }
            .sub { display: flex; align-items: center; font-size: 35px; line-height: 44px; gap: 11px; padding-left: 6px; }
            .sub .cn { font-size: 25px; color: #666; }
            svg { display: block; }
            .home { width: 399px; height: 10px; border-radius: 5px; background: #666867; margin-left: 336px; }
            </style>
            <div class="items">
                <div class="index">
                    <i></i>
                    <div class="num"><fit-text w="120">1666.76</fit-text></div>
                    <div class="sub"><fit-text class="cn" w="129">计算机设备</fit-text><fit-text w="91">0.52%</fit-text></div>
                </div>
                <nav-item><svg slot="icon" width="60" height="54" viewBox="-30 -27 60 54" fill="none" stroke="#666" stroke-width="2.600" stroke-linecap="round">
                    <path d="M-13.500-21A25 25 0 0 1 21 13M-20-13A25 25 0 0 0 15 20M-28-10 -20-13-21-5M28 9 20 13 22 4"/>
                    <path d="M-9-12 0-2 9-12M0-2V13M-9-2H9M-9 6H9" stroke-width="2.800"/>
                </svg>交易</nav-item>
                <nav-item><svg slot="icon" width="54" height="54" viewBox="-27 -27 54 54" fill="none" stroke="#666" stroke-width="2.600" stroke-linecap="round">
                    <path d="M9-23H-18Q-23-23-23-18V18Q-23 23-18 23H18Q23 23 23 18V-9"/>
                    <path d="M-6 5-3-1 13-17 16-14 0 3zM17-21 20-23 22-20 20-18z" fill="#666" stroke-width="2"/>
                </svg>发帖</nav-item>
                <nav-item><svg slot="icon" width="54" height="54" viewBox="-27 -27 54 54" fill="none" stroke="#666" stroke-width="2.600">
                    <rect x="-22" y="-22" width="20" height="20" rx="3"/><rect x="-22" y="2" width="20" height="20" rx="3"/><rect x="2" y="2" width="20" height="20" rx="3"/>
                    <rect x="4" y="-20" width="16" height="16" rx="2" transform="rotate(45 12 -12)"/>
                </svg>功能</nav-item>
                <nav-item><svg slot="icon" width="54" height="54" viewBox="-27 -27 54 54"><circle r="24" fill="none" stroke="#666" stroke-width="2.400"/><g fill="#666"><circle cx="-10" r="2.800"/><circle r="2.800"/><circle cx="10" r="2.800"/></g></svg>设自选</nav-item>
            </div>
            <div class="home"></div>
        `
    }
}

window.customElements.define("fit-text" , FitText);
window.customElements.define("quote-cell" , QuoteCell);
window.customElements.define("price-chart" , PriceChart);
window.customElements.define("macd-chart" , MacdChart);
window.customElements.define("order-book" , OrderBook);
window.customElements.define("trade-list" , TradeList);
window.customElements.define("info-card" , InfoCard);
window.customElements.define("nav-item" , NavItem);
window.customElements.define("status-bar" , StatusBar);
window.customElements.define("app-header" , AppHeader);
window.customElements.define("quote-panel" , QuotePanel);
window.customElements.define("period-tabs" , PeriodTabs);
window.customElements.define("chart-info" , ChartInfo);
window.customElements.define("chart-area" , ChartArea);
window.customElements.define("danmu-bar" , DanmuBar);
window.customElements.define("promo-banner" , PromoBanner);
window.customElements.define("section-tabs" , SectionTabs);
window.customElements.define("card-row" , CardRow);
window.customElements.define("bottom-nav" , BottomNav);
</script>
</body>
</html>
